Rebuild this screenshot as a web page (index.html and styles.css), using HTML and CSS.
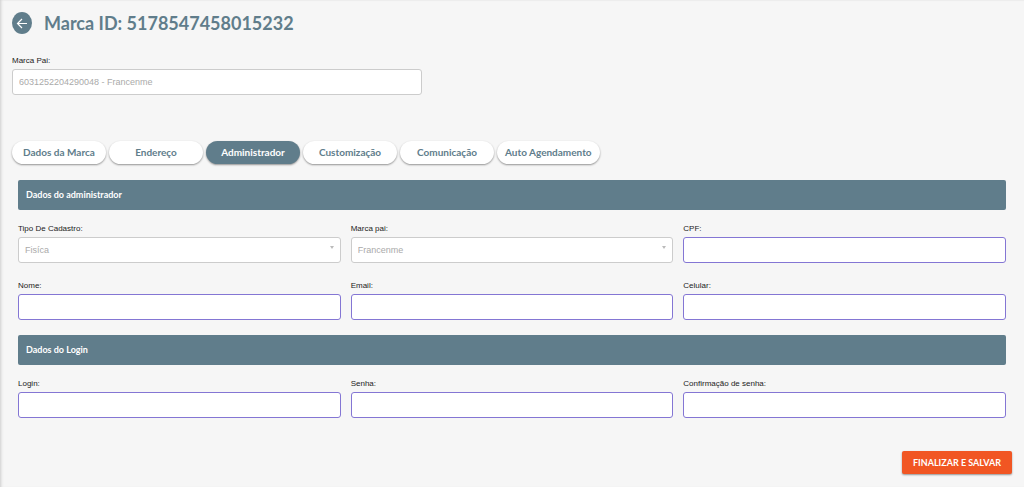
FILE: index.html
```html
<!DOCTYPE html>
<html lang="pt-BR">
<head>
<meta charset="utf-8">
<meta name="viewport" content="width=device-width, initial-scale=1">
<title>Marca</title>
<link rel="stylesheet" href="styles.css">
</head>
<body>
<main class="page">
  <header class="page-header">
    <button class="back" type="button" aria-label="Voltar">
      <svg viewBox="0 0 20 22" preserveAspectRatio="none" aria-hidden="true"><path d="M15 11.500H5.500M10 7l-4.500 4.500 4.500 4.500"/></svg>
    </button>
    <h1 class="title">Marca ID: 5178547458015232</h1>
  </header>

  <div class="field parent-brand">
    <label for="marca-pai">Marca Pai:</label>
    <input class="control muted" id="marca-pai" type="text" value="6031252204290048 - Francenme" disabled>
  </div>

  <nav class="tabs">
    <button class="tab" type="button">Dados da Marca</button>
    <button class="tab" type="button">Endereço</button>
    <button class="tab active" type="button">Administrador</button>
    <button class="tab" type="button">Customização</button>
    <button class="tab" type="button">Comunicação</button>
    <button class="tab" type="button">Auto Agendamento</button>
  </nav>

  <form class="form">
    <h2 class="section-title">Dados do administrador</h2>
    <div class="grid">
      <div class="field">
        <label for="tipo">Tipo De Cadastro:</label>
        <div class="select-wrap"><select class="control muted" id="tipo" disabled><option>Fisíca</option></select></div>
      </div>
      <div class="field">
        <label for="pai">Marca pai:</label>
        <div class="select-wrap"><select class="control muted" id="pai" disabled><option>Francenme</option></select></div>
      </div>
      <div class="field"><label for="cpf">CPF:</label><input class="control" id="cpf" type="text"></div>
      <div class="field"><label for="nome">Nome:</label><input class="control" id="nome" type="text"></div>
      <div class="field"><label for="email">Email:</label><input class="control" id="email" type="email"></div>
      <div class="field"><label for="celular">Celular:</label><input class="control" id="celular" type="tel"></div>
    </div>
    <h2 class="section-title">Dados do Login</h2>
    <div class="grid">
      <div class="field"><label for="login">Login:</label><input class="control" id="login" type="text"></div>
      <div class="field"><label for="senha">Senha:</label><input class="control" id="senha" type="password"></div>
      <div class="field"><label for="confirma">Confirmação de senha:</label><input class="control" id="confirma" type="password"></div>
    </div>
  </form>

  <footer class="actions"><button class="save" type="button">FINALIZAR E SALVAR</button></footer>
</main>
</body>
</html>
```
FILE: styles.css
```css
* { box-sizing: border-box; }

body {
  margin: 0;
  background: #f6f6f6;
  font-family: "Liberation Sans", Arial, sans-serif;
}

button, h1, h2 {
  margin: 0;
  font-family: Lato, sans-serif;
}

.page {
  min-height: 100vh;
  padding: 12px 12px 0;
  box-shadow: inset 3px 0 3px -2px #ccc, inset 0 2px 2px -2px #ddd;
}

.page-header {
  display: flex;
  align-items: center;
  gap: 12px;
  height: 22px;
}

.back {
  width: 20px;
  height: 22px;
  padding: 0;
  border: 0;
  border-radius: 50%;
  background: #607d8b;
}

.back svg {
  display: block;
  width: 100%;
  height: 100%;
  fill: none;
  stroke: #fff;
  stroke-width: 1.2;
}

.title {
  color: #607d8b;
  font-size: 18px;
  font-weight: 700;
  line-height: 22px;
}

.field {
  display: flex;
  flex-direction: column;
  gap: 2px;
  min-width: 0;
}

.field label {
  color: #222;
  font-size: 8px;
  line-height: 12px;
}

.control {
  display: block;
  width: 100%;
  height: 26px;
  padding: 0 6px;
  border: 1px solid #8476d4;
  border-radius: 3px;
  background: #fff;
  color: #222;
  font-family: inherit;
  font-size: 9px;
  appearance: none;
}

.control.muted {
  border-color: #ccc;
  color: #aaa;
  opacity: 1;
}

.select-wrap { position: relative; }

.select-wrap::after {
  content: "";
  position: absolute;
  top: 9px;
  right: 7px;
  border: 2px solid transparent;
  border-top: 3px solid #bbb;
  border-bottom: 0;
}

.parent-brand {
  width: 41%;
  margin-top: 21px;
}

.tabs {
  display: flex;
  flex-wrap: wrap;
  gap: 3px;
  margin-top: 46px;
}

.tab {
  min-width: 94px;
  height: 23px;
  padding: 0 8px 2px;
  border: 0;
  border-radius: 12px;
  background: #fff;
  color: #607d8b;
  font-size: 10px;
  font-weight: 700;
  box-shadow: 0 1px 2px rgba(0, 0, 0, 0.4);
}

.tab.active {
  background: #607d8b;
  color: #fff;
}

.form { padding: 16px 6px 0; }

.section-title {
  padding: 0 8px;
  border-radius: 2px;
  background: #607d8b;
  color: #fff;
  font-size: 9px;
  font-weight: 700;
  line-height: 30px;
}

.grid {
  display: grid;
  grid-template-columns: repeat(3, minmax(0, 1fr));
  gap: 17px 10px;
  padding: 13px 0 15px;
}

.actions {
  display: flex;
  justify-content: flex-end;
  padding: 18px 0 12px;
}

.save {
  height: 23px;
  padding: 0 11px;
  border: 0;
  border-radius: 2px;
  background: #f15623;
  color: #fff;
  font-size: 9px;
  font-weight: 700;
  box-shadow: 0 1px 2px rgba(0, 0, 0, 0.4);
}
```
